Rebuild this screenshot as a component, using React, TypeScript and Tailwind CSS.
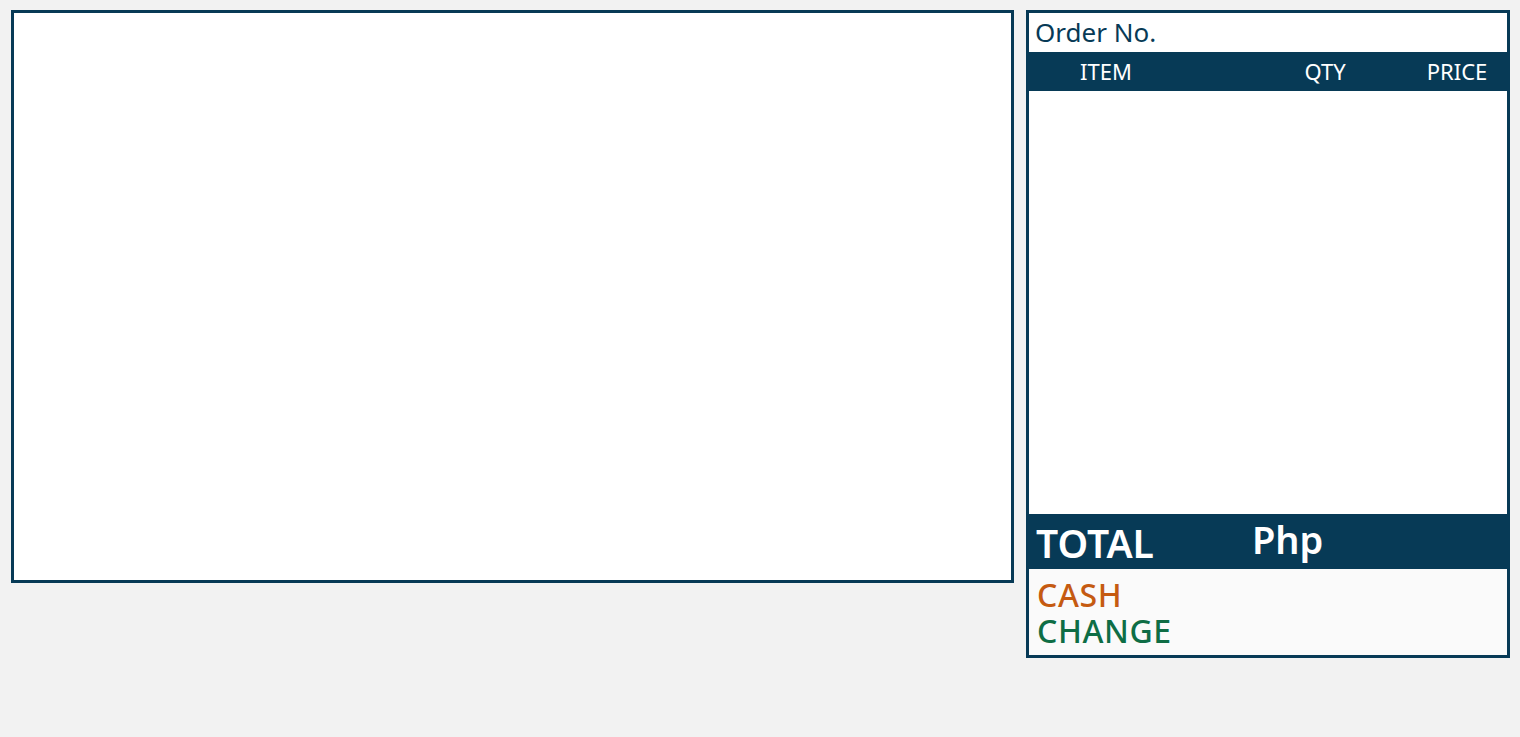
const NAVY = "bg-[#073a56]";

const OrderPanel = () => {
  return (
    <div className="flex h-[648px] w-[484px] flex-col border-[3px] border-[#073a56] bg-white">
      <div className="flex h-[39px] items-center pl-[6px] text-[26px] text-[#073a56]">Order No.</div>
      <div className={`${NAVY} flex h-[39px] items-center text-[22px] text-white`}>
        <div className="w-[154px] text-center">ITEM</div>
        <div className="w-[92px]" />
        <div className="w-[100px] text-center">QTY</div>
        <div className="w-[32px]" />
        <div className="w-[100px] text-center">PRICE</div>
      </div>
      {/* order lines go here */}
      <div className="flex-1 bg-white" />
      <div className={`${NAVY} flex h-[55px] items-center font-semibold text-white`}>
        <div className="w-[223px] pl-[7px] pt-[3px] text-[39px]">TOTAL</div>
        <div className="pb-[5px] text-[38px]">Php</div>
      </div>
      <div className="flex h-[86px] flex-col bg-[#fafafa] pl-[8px] pt-[8px] text-[32px] font-medium leading-[36px] tracking-[0.6px]">
        <div className="text-[#c55a11]">CASH</div>
        <div className="text-[#0e6d45]">CHANGE</div>
      </div>
    </div>
  );
};

export default function App() {
  return (
    <div
      className="flex h-[737px] w-full items-start gap-3 bg-[#f2f2f2] pl-[11px] pt-[10px]"
      style={{ fontFamily: '"Noto Sans", "Open Sans", sans-serif' }}
    >
      <div className="h-[573px] w-[1003px] border-[3px] border-[#073a56] bg-white" />
      <OrderPanel />
    </div>
  );
}
